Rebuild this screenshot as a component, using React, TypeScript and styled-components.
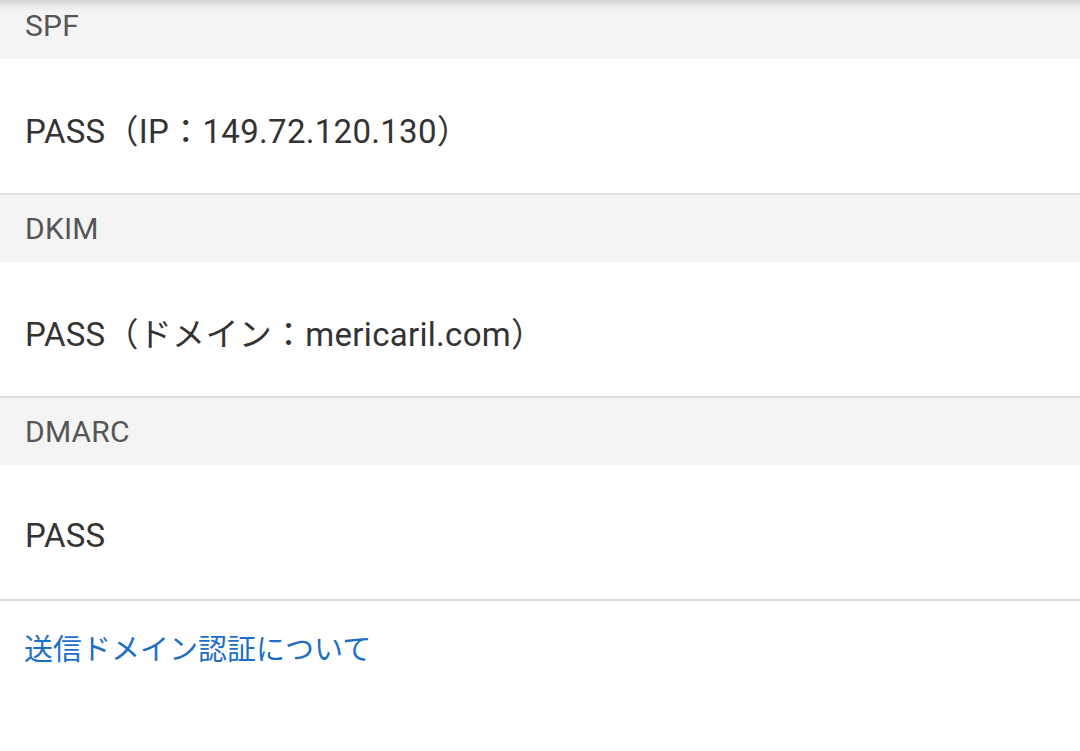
import React from 'react';
import styled, { createGlobalStyle } from 'styled-components';

const GlobalStyle = createGlobalStyle`
  html, body {
    margin: 0;
    padding: 0;
    background: #ffffff;
  }
  body {
    font-family: Roboto, "Noto Sans CJK JP", "Noto Sans", sans-serif;
    -webkit-font-smoothing: antialiased;
  }
`;

const results = [
  { label: 'SPF', value: 'PASS（IP：149.72.120.130）' },
  { label: 'DKIM', value: 'PASS（ドメイン：mericaril.com）' },
  { label: 'DMARC', value: 'PASS' },
];

const App = () => {
  return (
    <>
      <GlobalStyle />
      <Page>
        <TopShadow />
        <List>
          {results.map((r) => (
            <Section key={r.label}>
              <SectionHeader>{r.label}</SectionHeader>
              <SectionBody>{r.value}</SectionBody>
            </Section>
          ))}
        </List>
        <Footer>
          <HelpLink href="#">送信ドメイン認証について</HelpLink>
        </Footer>
      </Page>
    </>
  );
};

export default App;

const Page = styled.div`
  position: relative;
  width: 1080px;
  height: 751px;
  overflow: hidden;
  background: #fff;
`;

const TopShadow = styled.div`
  position: absolute;
  top: 0;
  left: 0;
  right: 0;
  height: 12px;
  background: linear-gradient(to bottom, rgba(0, 0, 0, 0.13), rgba(0, 0, 0, 0.04) 50%, rgba(0, 0, 0, 0));
  pointer-events: none;
`;

const List = styled.div`
  display: flex;
  flex-direction: column;
  margin-top: -8px;
`;

const Section = styled.section`
  display: flex;
  flex-direction: column;
  border-bottom: 2px solid #dedede;
`;

const SectionHeader = styled.div`
  display: flex;
  align-items: center;
  height: 67px;
  padding: 0 25px;
  background: #f4f4f4;
  color: #565656;
  font-size: 30px;
  letter-spacing: 0.2px;
`;

const SectionBody = styled.div`
  display: flex;
  align-items: center;
  box-sizing: border-box;
  height: 134px;
  padding: 6px 25px 0;
  color: #333333;
  font-size: 33px;
  letter-spacing: 0.3px;
`;

const Footer = styled.div`
  display: flex;
  padding: 25px 24px;
`;

const HelpLink = styled.a`
  color: #1d6fc6;
  font-size: 29px;
  text-decoration: none;
`;
